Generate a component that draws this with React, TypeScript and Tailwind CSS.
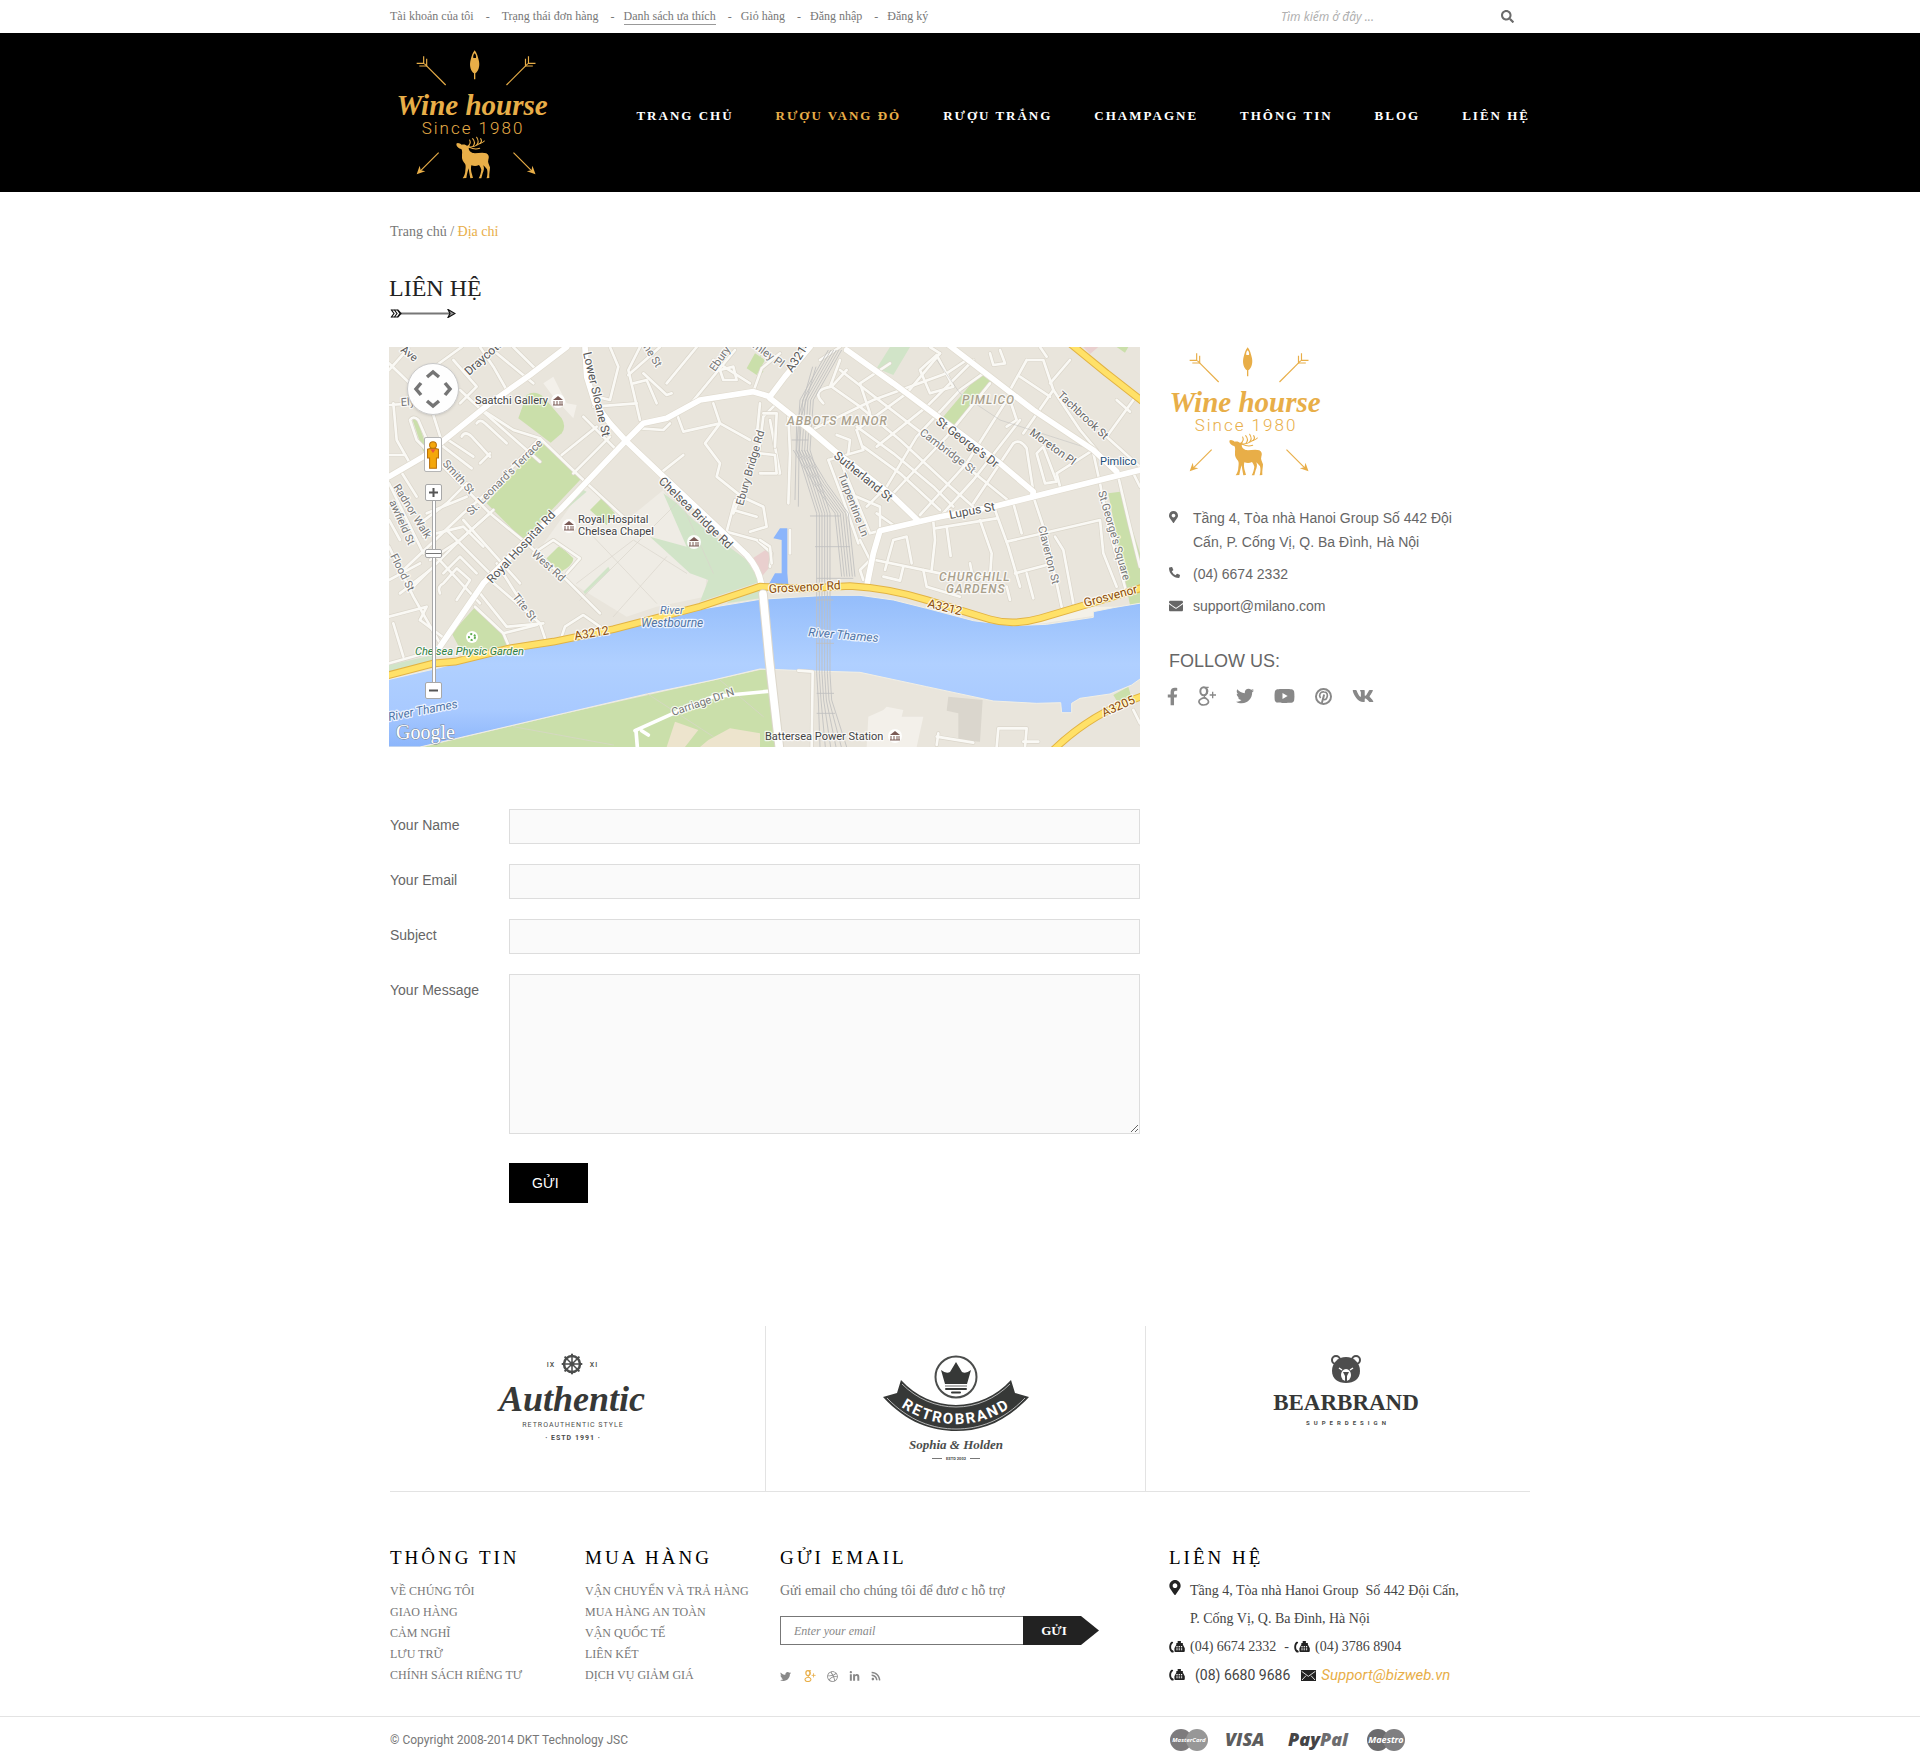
import type { ReactNode } from "react";
import {
  FaDribbble,
  FaEnvelope,
  FaFacebookF,
  FaLinkedinIn,
  FaMapMarkerAlt,
  FaPhoneAlt,
  FaRss,
  FaSearch,
  FaTwitter,
  FaVk,
  FaYoutube,
} from "react-icons/fa";

const SERIF = "font-['Liberation_Serif',serif]";
const SANS = "font-['Liberation_Sans',sans-serif]";
const CONTAINER = "mx-auto w-full max-w-[1140px]";

/* ---------- Logo ---------- */

function ArrowPair() {
  return (
    <g>
      <g fill="none" stroke="currentColor" strokeWidth="3.5">
        <path d="M204 155 L140 91" />
        <path d="M117 90 H138 V69" />
        <path d="M125 98 H147 V76" />
        <path d="M183 358 L126 415" />
      </g>
      <path fill="currentColor" d="M117 423 L126 397 L129 411 L143 414 Z" />
    </g>
  );
}

function WineLogo() {
  return (
    <svg viewBox="0 0 152 129" className="block h-[129px] w-[152px] overflow-visible text-[#e8ae48]" role="img" aria-label="Wine hourse, since 1980">
      <g transform="scale(0.3333) translate(-55 -50)">
        <ArrowPair />
        <g transform="translate(590.5 0) scale(-1 1)">
          <ArrowPair />
        </g>
        <path
          fill="currentColor"
          fillRule="evenodd"
          d="M291 51 C297 58 301 70 304 84 C307 100 302 114 293 120 V138 H289 V120 C280 114 275 100 278 84 C281 70 285 58 291 51 Z M291 60 C287 64 286 70 287 74 H295 C296 70 295 64 291 60 Z"
        />
        <path
          fill="currentColor"
          d="M236 331 C241 327 247 331 252 334 C259 332 265 334 269 338 L277 336 L273 344 C273 351 277 356 285 359 C299 361 313 355 326 360 C334 364 335 371 332 379 C329 387 335 394 337 402 C337 411 334 420 335 434 L327 435 C330 425 330 414 328 408 C324 402 320 399 317 396 C321 405 318 413 315 420 L311 435 L303 435 C308 426 310 417 311 409 C309 403 307 399 304 395 C296 399 288 398 281 396 C279 404 280 414 283 423 L286 434 L278 435 C276 423 274 414 273 405 C270 414 268 423 266 434 L255 435 C260 428 263 420 263 411 C264 403 265 396 262 391 C256 385 252 378 253 368 C253 359 255 353 251 347 C246 346 240 342 237 337 Z"
        />
        <g fill="none" stroke="currentColor" strokeWidth="3.2" strokeLinecap="round">
          <path d="M268 340 C282 343 292 340 300 334 C308 330 316 328 320 323" />
          <path d="M268 340 C276 335 280 328 276 320" />
          <path d="M286 339 C292 332 291 323 285 316" />
          <path d="M297 335 C303 329 302 320 297 312" />
          <path d="M308 330 C312 326 312 320 309 316" />
          <path d="M275 342 C285 347 298 348 306 345" />
        </g>
      </g>
      <text x="76" y="65" textAnchor="middle" fontFamily="'Liberation Serif', serif" fontStyle="italic" fontWeight="700" fontSize="29" fill="currentColor">
        Wine hourse
      </text>
      <text x="77" y="84" textAnchor="middle" fontFamily="Roboto, sans-serif" fontWeight="300" fontSize="17" letterSpacing="2" fill="currentColor">
        Since 1980
      </text>
    </svg>
  );
}

/* ---------- Small icons ---------- */

function GooglePlusIcon({ className }: { className: string }) {
  return (
    <svg viewBox="0 0 54 58" className={className} fill="none" stroke="currentColor" aria-hidden="true">
      <ellipse cx="17" cy="15" rx="10" ry="12" strokeWidth="6" />
      <path d="M19 3 H32 M25 5 C30 12 31 19 24 25 C16 30 18 33 25 37" strokeWidth="4" />
      <path d="M25 37 C38 46 29 56 17 56 C2 56 -2 42 10 37 C16 34 22 35 25 37 Z" strokeWidth="5" />
      <path d="M44 16 V36 M35 26 H54" strokeWidth="4" />
    </svg>
  );
}

function PinterestIcon() {
  return (
    <svg viewBox="0 0 52 52" className="size-[17px]" fill="none" stroke="currentColor" aria-hidden="true">
      <circle cx="26" cy="26" r="23" strokeWidth="6" />
      <path d="M17 31 C10 21 17 11 27 12 C38 12 40 22 36 30 C33 37 26 37 24 31" strokeWidth="5" />
      <path d="M28 20 L21 46" strokeWidth="6" />
    </svg>
  );
}

function DeskPhoneIcon() {
  return (
    <svg viewBox="0 0 48 37" className="h-3 w-4 shrink-0 text-[#222222]" aria-hidden="true">
      <path fill="currentColor" d="M6 3 C9 1 13 2 12 5 C12 8 9 8 8 10 C5 15 5 22 8 27 C9 29 13 28 14 32 C14 36 9 37 6 34 C-2 26 -2 11 6 3 Z" />
      <path fill="currentColor" d="M26 0 H36 V6 H42 V11 L48 22 V31 Q48 34 45 34 H19 Q16 34 16 31 V22 L22 11 V6 H26 Z" />
      <path stroke="#fff" strokeWidth="3" strokeDasharray="4 3" d="M22 17 H43 M22 22 H43 M22 27 H43" />
    </svg>
  );
}

function MailIcon() {
  return (
    <svg viewBox="0 0 45 33" className="h-[11px] w-[15px] shrink-0" aria-hidden="true">
      <rect width="45" height="33" fill="#222222" />
      <path d="M2 4 L22 19 L43 4 M3 30 L15 17 M42 30 L30 17" stroke="#fff" strokeWidth="2.5" fill="none" />
    </svg>
  );
}

/* ---------- Map ---------- */

const WEST_LANES = [
  "M27 90 L85 25", "M27 70 L110 150", "M150 90 L245 21", "M220 60 L290 140 L240 190", "M300 21 L340 80 L380 150", "M400 21 L470 90",
  "M240 150 L310 215 L480 365", "M350 40 L460 130", "M27 195 L100 190 M40 190 L50 300 L90 370",
  "M90 240 L110 300 L140 330 M90 240 Q100 225 115 240 L150 320", "M160 225 L190 320 M190 320 L275 385 M205 300 L280 350",
  "M245 290 Q255 270 275 290 L330 350 M290 250 Q300 235 315 250 L380 310 M330 340 L300 370",
  "M300 205 L400 270 L480 295 L610 420", "M480 295 L330 450 L250 520 L60 700", "M180 370 L330 520 L440 610", "M330 520 L250 590 L100 740",
  "M27 430 L130 640 M60 390 L110 470", "M27 540 L60 600", "M27 620 L100 770 L180 910", "M27 345 L75 345",
  "M120 550 L200 490 L260 430 M140 520 L260 470", "M130 590 L250 560 L310 620", "M200 570 L330 700", "M250 540 L420 730", "M160 640 L300 790",
  "M180 760 Q170 740 190 730 L230 685 L270 720 L230 780", "M190 700 L240 650 L290 700", "M150 660 L240 600 L340 510",
  "M27 720 L120 670 M60 760 L150 690", "M27 830 L140 800 L120 840 M40 850 L70 950", "M27 970 L170 930", "M120 840 L200 900",
  "M285 800 L370 880 L385 915", "M300 760 L380 860 L490 850", "M330 720 L480 850 L495 895", "M350 670 L420 780", "M370 880 L470 855",
  "M545 890 L555 860 L610 825 L660 860", "M440 610 L560 720 L660 820", "M610 420 L740 540", "M610 230 L710 330", "M545 345 L650 260", "M580 400 L690 290",
  "M640 200 L770 190", "M690 21 L715 80 L690 180 L650 170", "M780 21 L745 90 L780 240", "M840 21 L745 105", "M760 130 L800 120 L830 190",
  "M790 100 L860 165 L875 160", "M860 130 L950 21", "M890 220 L910 275 L1020 250 L1000 190", "M780 265 L850 270 L870 250",
  "M1020 250 L975 310 L1020 370 L1010 410 L1085 470 L1150 500 L1160 560 L1110 575", "M1065 480 L1040 575 L1130 600 L1175 640 L1170 680",
  "M1120 155 L1145 85 L1200 40", "M1000 60 L1110 130", "M925 200 L1065 30", "M1140 190 L1130 290", "M1190 190 L1150 230 L1135 350",
  "M1170 240 L1200 400 L1150 400", "M1020 250 L1110 300", "M840 400 L910 345", "M1060 510 L1130 530 M1080 470 L1060 520",
  "M460 640 L520 600 L600 655 L560 700", "M1020 90 L1060 80 L1070 120 L1030 120 Z",
];

const EAST_LANES = [
  "M240 90 L460 260 L620 380 L755 490", "M215 140 L300 200 L420 300 L560 430 L640 500", "M290 260 L400 340 L520 440 L580 500",
  "M310 320 L420 400 L540 510", "M165 265 L340 180 L560 100 L620 60", "M190 190 Q150 150 215 140 L260 90 M210 140 L240 60", "M180 60 L240 21",
  "M290 270 L440 160 L540 40", "M350 320 L500 200 L640 60", "M320 500 L380 440 L470 290 L600 150 L670 100", "M390 470 L560 290 L690 130",
  "M480 525 L620 370 L740 180", "M540 530 L640 420 L780 240", "M640 490 L760 310 Q780 295 800 325 L820 455", "M330 220 L300 130 L390 70",
  "M480 90 L530 45 L580 140 L510 160 L480 90", "M540 40 L510 21", "M690 40 L700 75 L735 70 L720 30", "M750 180 L770 240 L740 260",
  "M800 60 L750 150 M800 60 L850 60 L880 150 L790 280", "M780 110 L870 170", "M880 150 L960 270 L1010 330", "M840 21 L860 50",
  "M1140 380 L1040 290 L1120 180", "M1070 180 L1110 215", "M830 340 L855 430 L890 425 L850 320 Z", "M900 440 L890 400 L1000 330",
  "M1000 340 L1020 430 L1045 560 L1100 760", "M1070 390 L1110 560 L1140 680", "M820 470 L860 590 L905 800", "M740 605 L1020 540 L1030 640 L1070 740",
  "M705 510 L745 620 L780 740", "M760 490 L785 580", "M660 540 L695 640 L690 710", "M520 545 L525 600 L515 690", "M765 700 L860 675",
  "M800 700 L820 775", "M885 590 L910 630 L940 790", "M560 560 L572 648", "M525 565 L710 535", "M345 660 L540 700 L700 705",
  "M375 690 L400 600 L440 590 L455 670 M370 710 L420 722 L430 680", "M490 690 L500 740 L600 770", "M740 740 L750 780", "M630 670 L640 720",
  "M205 360 L250 480 L295 610 M205 360 L310 330 L290 270", "M230 285 L270 300 L265 340", "M240 360 L330 580 L350 575", "M300 600 L330 660 L300 690 L310 720",
  "M85 230 L90 340 L85 490", "M90 570 V640", "M10 220 L50 220 L45 320 M0 340 L45 345 L50 400 L0 400", "M0 600 L30 620 L35 670",
  "M115 992 L158 995 L155 1221", "M530 1190 L640 1208 M535 1180 L530 1215", "M710 1221 L715 1165 L800 1165 L795 1221 M790 1205 L835 1205",
  "M1120 400 L1140 440", "M350 520 L400 555 M360 570 V500 L290 470", "M1120 1110 L1140 1150", "M930 60 L870 130",
];

const MAIN_ROADS = [
  "M27 410 L130 350 L330 190 L450 105 L560 21",
  "M615 21 L620 110 L645 190 L690 250 L735 300 L840 400 L1000 550 L1100 645 Q1140 690 1145 740",
  "M180 920 L310 730 L440 600 L540 510 L735 305 L790 250 L860 235 L960 180 L1120 155 L1170 170 L1215 110 L1290 21",
  "M1170 175 L1290 270 L1360 330 L1540 470 L1612 540",
  "M1400 30 L1540 130 L1660 220 L1860 370 L1960 455 L1958 470",
  "M1700 10 L1960 210 L2140 330 L2210 395",
  "M2300 385 L2160 420 L1840 500 L1680 530 L1500 572 L1480 640 L1460 740",
];

const ARTERIAL =
  "M20 1007 L163 970 L225 965 L390 925 L520 905 L700 868 L960 800 L1080 760 L1140 740 L1270 745 L1410 738 Q1530 745 1640 780 L1830 838 Q1900 858 1980 835 L2200 770 L2290 742";

const YELLOW_ROADS = [ARTERIAL, "M2070 10 L2180 100 L2290 186", "M2290 1068 Q2140 1115 2020 1230"];

const RIVER =
  "M20 1020 L163 987 L300 952 L400 930 L600 895 L800 843 L960 808 L1140 778 L1340 766 L1440 766 L1540 780 L1640 805 L1780 842 L1900 857 L2000 853 L2140 832 V815 L2200 803 L2290 788 V1010 L2255 1035 L2190 1062 L2100 1075 L2075 1090 V1118 H2045 L2042 1088 L1970 1090 L1840 1083 L1640 1040 L1440 997 L1300 993 L1140 987 L1000 1020 L800 1062 L560 1118 L120 1221 H20 Z";

type MapLabel = [text: string, x: number, y: number, angle: number, size: number, color: string, extra?: "italic" | "area"];

const MAP_LABELS: MapLabel[] = [
  ["Ave", 11, 4, 38, 11, "#555555"],
  ["Draycott", 80, 29, -42, 12, "#555555"],
  ["Ely", 12, 59, -4, 11, "#777777"],
  ["Saatchi Gallery", 86, 57, 0, 11, "#444444"],
  ["Lower Sloane St", 194, 6, 77, 12, "#555555"],
  ["Ebury", 326, 25, -55, 11, "#777777"],
  ["mley Pl", 363, 0, 36, 11, "#777777"],
  ["ne St", 254, 0, 58, 11, "#777777"],
  ["Smith St", 53, 117, 48, 11, "#777777"],
  ["St. Leonard's Terrace", 82, 169, -45, 11, "#777777"],
  ["Radnor Walk", 4, 140, 58, 11, "#777777"],
  ["awfield St", 0, 155, 66, 11, "#777777"],
  ["Flood St", 1, 209, 63, 11, "#777777"],
  ["Royal Hospital Rd", 103, 237, -47, 12, "#555555"],
  ["West Rd", 142, 208, 42, 11, "#777777"],
  ["Tite St", 123, 250, 52, 11, "#777777"],
  ["Chelsea Bridge Rd", 269, 135, 44, 12, "#555555"],
  ["Ebury Bridge Rd", 354, 159, -74, 11, "#666666"],
  ["Royal Hospital", 189, 176, 0, 11, "#444444"],
  ["Chelsea Chapel", 189, 188, 0, 11, "#444444"],
  ["Chelsea Physic Garden", 26, 308, 0, 11, "#2f8145", "italic"],
  ["River", 271, 267, 0, 11, "#5075a8", "italic"],
  ["Westbourne", 252, 280, 0, 12, "#5075a8", "italic"],
  ["River Thames", 0, 374, -11, 12, "#5075a8", "italic"],
  ["A3212", 186, 293, -10, 12, "#8a4b08"],
  ["A3212", 538, 260, 14, 12, "#8a4b08"],
  ["Carriage Dr N", 284, 369, -19, 11, "#777777"],
  ["A3214", 403, 26, -57, 12, "#555555"],
  ["ABBOTS MANOR", 398, 78, 0, 12, "#a9a08c", "area"],
  ["PIMLICO", 573, 57, 0, 12, "#a9a08c", "area"],
  ["CHURCHILL", 550, 234, 0, 12, "#a9a08c", "area"],
  ["GARDENS", 557, 246, 0, 12, "#a9a08c", "area"],
  ["Sutherland St", 444, 110, 39, 12, "#555555"],
  ["Turpentine Ln", 449, 128, 69, 11, "#777777"],
  ["Cambridge St", 530, 87, 37, 11, "#777777"],
  ["St George's Dr", 546, 76, 37, 12, "#555555"],
  ["Tachbrook St", 668, 49, 43, 11, "#666666"],
  ["Moreton Pl", 640, 87, 36, 11, "#666666"],
  ["Pimlico", 711, 118, 0, 11, "#1c4f7a"],
  ["Lupus St", 561, 172, -11, 12, "#555555"],
  ["Claverton St", 649, 180, 76, 11, "#777777"],
  ["St.George's Square", 709, 145, 74, 11, "#777777"],
  ["Grosvenor Rd", 380, 246, -3, 12, "#8a4b08"],
  ["Grosvenor", 696, 260, -15, 12, "#8a4b08"],
  ["River Thames", 419, 289, 5, 12, "#5075a8", "italic"],
  ["Battersea Power Station", 376, 393, 0, 11, "#444444"],
  ["A3205", 715, 370, -24, 12, "#8a4b08"],
];

function Landmark({ x, y }: { x: number; y: number }) {
  return (
    <g transform={`translate(${x} ${y})`}>
      <circle r="7" fill="#fff" opacity="0.9" />
      <path d="M-5 -1 L0 -5 L5 -1 Z" fill="#7a5a55" />
      <path d="M-4 0 V4 M-1 0 V4 M2 0 V4 M4 0 V4 M-5 4 H5" stroke="#7a5a55" />
    </g>
  );
}

function Roads({ paths, width, color }: { paths: string[]; width: number; color: string }) {
  return (
    <g fill="none" stroke={color} strokeWidth={width} strokeLinejoin="round" strokeLinecap="round">
      {paths.map((d) => (
        <path key={d} d={d} />
      ))}
    </g>
  );
}

const RAILS = [0, 8, 16, 24, 32, 40];

function MapDrawing() {
  return (
    <svg viewBox="0 0 751 400" preserveAspectRatio="xMidYMid slice" className="block h-[400px] w-full" role="img" aria-label="Bản đồ">
      <defs>
        <linearGradient id="water" x1="0" y1="0" x2="0" y2="1">
          <stop offset="0" stopColor="#94bdfb" />
          <stop offset="0.45" stopColor="#b0d0ff" />
          <stop offset="0.75" stopColor="#a9caff" />
          <stop offset="1" stopColor="#8bb5fb" />
        </linearGradient>
      </defs>
      <rect width="751" height="400" fill="#e9e5dc" />
      <g transform="translate(-9 -7) scale(0.33333)">
        <path fill="#efece5" d="M620 430 L740 540 L850 450 L980 700 L975 770 L830 800 L740 830 L560 720 L470 640 Z" />
        <g fill="#cadfaa">
          <path d="M415 235 L440 165 Q465 150 490 170 L545 235 Q560 260 545 280 L512 308 Z" />
          <path d="M485 305 L605 415 L430 600 L320 490 Z" />
          <path d="M630 510 L665 475 L705 520 L680 555 Z M500 655 L535 620 Q545 620 580 655 Q580 670 560 685 L535 700 Z" />
          <path d="M215 880 L285 802 L370 880 L385 915 L250 945 Z" />
          <path d="M1100 85 L1125 40 L1155 60 L1130 105 Z M98 240 L110 232 L140 325 L130 335 Z" />
          <path d="M1690 230 L1800 100 L1835 125 L1725 265 Z" />
          <path d="M2185 460 L2220 455 L2280 640 V790 L2250 795 Z" />
          <path d="M2210 21 H2245 L2235 38 Z M2200 1065 L2245 1040 L2255 1075 L2215 1090 Z" />
          <path d="M130 1221 L550 1122 L1140 990 L1165 988 L1210 1221 Z" />
          <path d="M1140 40 V105 L1150 95 Z" />
        </g>
        <g fill="#d1e4c8">
          <path d="M850 460 L890 490 L940 540 L1100 660 L1140 725 L960 785 L985 720 L930 700 L810 590 L920 620 Z" />
          <path d="M1490 85 L1530 21 H1590 L1540 105 Z M610 755 L685 680 L690 690 L615 762 Z M550 515 L610 450 L620 455 Z" />
          <path d="M27 975 L160 945 V965 L27 1000 Z M1060 775 L1140 750 V775 L1040 790 Z" />
        </g>
        <path fill="#ede4cd" d="M885 1145 L955 1170 L915 1221 H860 Z M985 1200 L1050 1165 L1140 1180 V1221 H960 Z" />
        <path fill="#e9cfce" d="M1110 660 L1165 625 L1170 680 L1145 710 Z M2110 21 H2155 L2130 42 Z" />
        <path fill="#dad6cd" d="M1705 1070 L1808 1080 L1800 1205 L1735 1200 V1120 L1700 1112 Z" />
        <path fill="#f3f0ea" d="M1465 1130 L1510 1110 L1520 1100 L1570 1110 L1565 1130 L1630 1130 L1610 1221 H1460 Z M490 130 L520 110 L560 190 L590 195 L580 235 L520 170 Z" />
        <path fill="#8bb5fb" d="M1180 595 L1200 565 H1222 V700 L1225 735 H1165 L1185 700 L1205 700 V600 Z" />
        <path fill="#f4f1e8" d="M1900 857 L1990 850 L2140 828 V815 L2220 800 L2140 800 Z" />
        <path fill="url(#water)" d={RIVER} stroke="#f2efe4" strokeWidth="3" />

        <Roads paths={["M600 780 L900 480 L1000 700", "M640 590 L830 790", "M590 730 L760 600 L920 700", "M700 830 L860 650", "M800 1060 L1000 1190", "M400 1160 L700 1215", "M1020 1020 L1150 1130"]} width={2} color="#d9d5cb" />
        <Roads paths={WEST_LANES} width={12} color="#dbd6cb" />
        <Roads paths={WEST_LANES} width={8} color="#faf9f5" />
        <g transform="translate(1140 0)">
          <Roads paths={EAST_LANES} width={12} color="#dbd6cb" />
          <Roads paths={EAST_LANES} width={8} color="#faf9f5" />
        </g>
        <Roads paths={["M765 1172 L880 1120 L1000 1070 L1185 1052", "M768 1172 L772 1221 M785 1172 L805 1185"]} width={11} color="#ffffff" />

        <g fill="none" stroke="#bfbfbf" strokeWidth="2.5">
          {RAILS.map((o) => (
            <path key={o} d={`M${1345 + o} 30 L${1260 + o} 180 L${1250 + o} 330 L${1310 + o} 520 L${1310 + o} 1000 L${1315 + o} 1080 L${1320 + o * 2} 1221`} />
          ))}
          {RAILS.map((o) => (
            <path key={`b${o}`} d={`M${1240 + o} 330 L${1300 + o} 430 L${1365 + o} 520 L${1385 + o} 710`} />
          ))}
          <path d="M1298 80 L1250 250 L1245 480 M1308 80 L1258 250 L1255 500" />
          <path d="M1400 30 L1560 150 M1670 60 L1740 160 L1860 240 L2140 330" strokeWidth="1.5" />
          <path d="M1290 528 H1380 M1235 300 H1285 M1305 620 H1410 M1310 715 H1420 M1310 780 H1360 M1308 910 H1362 M1310 1060 H1362 M1310 1120 H1365" />
        </g>

        <Roads paths={MAIN_ROADS} width={21} color="#e0dbcf" />
        <Roads paths={MAIN_ROADS} width={17} color="#ffffff" />
        <Roads paths={YELLOW_ROADS} width={23} color="#e2b343" />
        <Roads paths={YELLOW_ROADS} width={17} color="#ffe168" />
        <Roads paths={["M1149 762 L1168 960 L1200 1240"]} width={29} color="#dcd7cb" />
        <Roads paths={["M1149 762 L1168 960 L1200 1240"]} width={23} color="#ffffff" />
      </g>

      <g fontFamily="Roboto, sans-serif" stroke="#ffffff" strokeOpacity="0.75" strokeWidth="2.5" paintOrder="stroke" strokeLinejoin="round">
        {MAP_LABELS.map(([text, x, y, angle, size, color, extra]) => (
          <text
            key={`${text}-${x}`}
            transform={`translate(${x} ${y}) rotate(${angle})`}
            fontSize={size}
            fill={color}
            fontStyle={extra ? "italic" : "normal"}
            fontWeight={extra === "area" ? 500 : 400}
            letterSpacing={extra === "area" ? 1 : 0}
          >
            {text}
          </text>
        ))}
      </g>
      <Landmark x={169} y={54} />
      <Landmark x={180} y={179} />
      <Landmark x={305} y={195} />
      <Landmark x={506} y={389} />
      <circle cx="83" cy="290" r="6" fill="#fff" />
      <circle cx="83" cy="290" r="3" fill="none" stroke="#5fae4f" strokeWidth="2" strokeDasharray="2 2" />
      <text x="7" y="392" fontFamily="'Liberation Serif', serif" fontSize="20" fill="#ffffff" stroke="#7d8a99" strokeWidth="1" paintOrder="stroke">
        Google
      </text>
    </svg>
  );
}

const MAP_BUTTON =
  "flex h-[17px] w-[17px] items-center justify-center rounded-[2px] border border-[#a8a8a8] bg-white text-[#555555]";

function ContactMap() {
  return (
    <div className="relative">
      <MapDrawing />
      <div className="absolute top-4 left-[18px] flex w-[52px] flex-col items-center">
        <button type="button" aria-label="Di chuyển bản đồ" className="flex size-[52px] items-center justify-center rounded-full border border-[#c9c9c9] bg-white/95 shadow">
          <svg viewBox="0 0 50 50" className="size-[50px]" fill="none" stroke="#757575" strokeWidth="3.5">
            <path d="M19 13 L25 8 L31 13 M19 37 L25 42 L31 37 M13 19 L8 25 L13 31 M37 19 L42 25 L37 31" />
          </svg>
        </button>
        <button type="button" aria-label="Chế độ xem phố" className="mt-[22px] flex h-[35px] w-[18px] items-center justify-center rounded-[2px] border border-[#b5b5b5] bg-white">
          <svg viewBox="0 0 40 82" className="h-7 w-[14px]">
            <circle cx="20" cy="12" r="10" fill="#f4a70c" stroke="#b9700a" strokeWidth="3" />
            <path d="M4 24 Q20 18 36 24 V50 H30 V80 H10 V50 H4 Z" fill="#f4a70c" stroke="#b9700a" strokeWidth="3" />
            <path d="M12 24 H28 L20 35 Z" fill="#e9573f" />
          </svg>
        </button>
        <button type="button" aria-label="Phóng to" className={`${MAP_BUTTON} mt-3`}>
          <svg viewBox="0 0 9 9" className="size-[9px]" stroke="currentColor" strokeWidth="2">
            <path d="M0 4.500 H9 M4.500 0 V9" />
          </svg>
        </button>
        <input
          type="range"
          aria-label="Mức thu phóng"
          defaultValue={28}
          className="m-0 h-[181px] w-[17px] appearance-none bg-[linear-gradient(to_right,transparent_7px,#a8a8a8_7px,#a8a8a8_8px,#ffffff_8px,#ffffff_10px,#a8a8a8_10px,#a8a8a8_11px,transparent_11px)] [writing-mode:vertical-lr] [&::-webkit-slider-thumb]:h-[9px] [&::-webkit-slider-thumb]:w-[17px] [&::-webkit-slider-thumb]:appearance-none [&::-webkit-slider-thumb]:rounded-[2px] [&::-webkit-slider-thumb]:border [&::-webkit-slider-thumb]:border-[#a8a8a8] [&::-webkit-slider-thumb]:bg-[linear-gradient(#ffffff_3px,#777777_3px,#777777_4px,#ffffff_4px)]"
        />
        <button type="button" aria-label="Thu nhỏ" className={MAP_BUTTON}>
          <svg viewBox="0 0 9 9" className="size-[9px]" stroke="currentColor" strokeWidth="2">
            <path d="M0 4.500 H9" />
          </svg>
        </button>
      </div>
    </div>
  );
}

/* ---------- Header ---------- */

const TOP_LINKS = ["Tài khoản của tôi", "Trạng thái đơn hàng", "Danh sách ưa thích", "Giỏ hàng", "Đăng nhập", "Đăng ký"];
const NAV = ["TRANG CHỦ", "RƯỢU VANG ĐỎ", "RƯỢU TRẮNG", "CHAMPAGNE", "THÔNG TIN", "BLOG", "LIÊN HỆ"];

function Header() {
  return (
    <header>
      <div className={`${CONTAINER} flex h-[33px] items-center justify-between`}>
        <ul className={`flex gap-3 text-xs text-[#777777] ${SERIF}`}>
          {TOP_LINKS.map((label, i) => (
            <li key={label} className={i === 1 ? "flex gap-3" : "flex gap-[9px]"}>
              {i > 0 && <span>-</span>}
              <a href="#" className={i === 2 ? "border-b border-[#999999] leading-[14px]" : "leading-[14px]"}>
                {label}
              </a>
            </li>
          ))}
        </ul>
        <form className="mr-4 flex items-center" role="search">
          <input
            type="search"
            aria-label="Tìm kiếm"
            placeholder="Tìm kiếm ở đây ..."
            className="w-[220px] font-['Noto_Sans',sans-serif] text-xs italic outline-none placeholder:text-[#b0b0b0]"
          />
          <button type="submit" aria-label="Tìm" className="text-[#6b6b6b]">
            <FaSearch className="size-[13px]" />
          </button>
        </form>
      </div>
      <div className="bg-black">
        <div className={`${CONTAINER} flex min-h-[159px] items-center justify-between pt-[3px]`}>
          <a href="#" className="ml-[6px]">
            <WineLogo />
          </a>
          <nav className="pt-[3px]">
            <ul className={`flex flex-wrap gap-[42px] text-[13px] font-bold tracking-[2px] text-white ${SERIF}`}>
              {NAV.map((label, i) => (
                <li key={label}>
                  <a href="#" className={i === 1 ? "text-[#e8ae48]" : ""}>
                    {label}
                  </a>
                </li>
              ))}
            </ul>
          </nav>
        </div>
      </div>
    </header>
  );
}

/* ---------- Contact ---------- */

function ContactDetail({ icon, children }: { icon: ReactNode; children: ReactNode }) {
  return (
    <div className="flex">
      <dt className="w-6 shrink-0 pt-[5px] text-[#666666]">{icon}</dt>
      <dd>{children}</dd>
    </div>
  );
}

function ContactAside() {
  return (
    <aside className={`col-span-4 -ml-px text-[#666666] ${SANS}`}>
      <WineLogo />
      <dl className="mt-[30px] space-y-2 text-sm leading-6">
        <ContactDetail icon={<FaMapMarkerAlt className="h-3 w-[9px]" />}>
          Tầng 4, Tòa nhà Hanoi Group Số 442 Đội
          <br />
          Cấn, P. Cống Vị, Q. Ba Đình, Hà Nội
        </ContactDetail>
        <ContactDetail icon={<FaPhoneAlt className="size-[11px]" />}>(04) 6674 2332</ContactDetail>
        <ContactDetail icon={<FaEnvelope className="size-[14px]" />}>support@milano.com</ContactDetail>
      </dl>
      <h2 className="mt-[29px] text-lg leading-7">FOLLOW US:</h2>
      <div className="mt-[11px] -ml-[2px] flex h-5 items-center gap-5 text-[#888888]">
        <a href="#" aria-label="Facebook"><FaFacebookF className="h-[19px] w-[11px]" /></a>
        <a href="#" aria-label="Google Plus"><GooglePlusIcon className="h-5 w-[18px]" /></a>
        <a href="#" aria-label="Twitter"><FaTwitter className="size-[18px]" /></a>
        <a href="#" aria-label="YouTube"><FaYoutube className="h-5 w-[21px]" /></a>
        <a href="#" aria-label="Pinterest"><PinterestIcon /></a>
        <a href="#" aria-label="VK"><FaVk className="size-[22px]" /></a>
      </div>
    </aside>
  );
}

const FIELDS = [
  { id: "name", label: "Your Name", type: "text" },
  { id: "email", label: "Your Email", type: "email" },
  { id: "subject", label: "Subject", type: "text" },
];

const FIELD_BOX = "block min-w-0 flex-1 border border-[#dddddd] bg-[#fafafa] px-3 text-sm outline-none";

function ContactForm() {
  return (
    <form className={`mt-[62px] space-y-5 text-sm text-[#666666] ${SANS}`}>
      {FIELDS.map((f) => (
        <div key={f.id} className="flex">
          <label htmlFor={f.id} className="w-[120px] pl-px leading-[33px]">{f.label}</label>
          <input id={f.id} type={f.type} className={`${FIELD_BOX} h-[35px]`} />
        </div>
      ))}
      <div className="flex">
        <label htmlFor="message" className="w-[120px] pl-px leading-[33px]">Your Message</label>
        <textarea id="message" className={`${FIELD_BOX} h-[160px] resize-y py-2`} />
      </div>
      <div className="pt-[9px] pl-[120px]">
        <button type="submit" className="flex h-10 w-[79px] items-center bg-black pl-[23px] text-sm text-white">GỬI</button>
      </div>
    </form>
  );
}

/* ---------- Brands ---------- */

const SPOKES = [0, 45, 90, 135, 180, 225, 270, 315];

function AuthenticLogo() {
  return (
    <svg viewBox="0 0 150 90" className="h-[90px] w-[150px] overflow-visible" role="img" aria-label="Authentic">
      <g transform="translate(75 11)" stroke="#4b4d4c" fill="none">
        <circle r="8" strokeWidth="2.500" />
        <circle r="2" fill="#4b4d4c" />
        {SPOKES.map((a) => (
          <g key={a} transform={`rotate(${a})`}>
            <path d="M0 0 V-10" strokeWidth="1.500" />
            <circle cy="-9.500" r="1" fill="#4b4d4c" stroke="none" />
          </g>
        ))}
      </g>
      <g textAnchor="middle" fill="#4b4d4c" fontFamily="Roboto, sans-serif">
        <text x="54" y="14" fontSize="7" fontWeight="500" letterSpacing="1">IX</text>
        <text x="97" y="14" fontSize="7" fontWeight="500" letterSpacing="1">XI</text>
        <text x="75" y="58" fontSize="36" fontWeight="700" fontStyle="italic" fontFamily="'Liberation Serif', serif" fill="#363837">Authentic</text>
        <text x="76" y="74" fontSize="7" letterSpacing="1">RETROAUTHENTIC STYLE</text>
        <text x="76" y="87" fontSize="7" fontWeight="700" letterSpacing="1">· ESTD 1991 ·</text>
      </g>
    </svg>
  );
}

function RetroLogo() {
  return (
    <svg viewBox="0 0 148 108" className="h-[108px] w-[148px] overflow-visible" role="img" aria-label="Retrobrand, Sophia and Holden">
      <circle cx="74" cy="22" r="20.500" fill="none" stroke="#4b4d4c" strokeWidth="2" />
      <path fill="#363837" d="M63 29 L59 15 Q64 19 68 17 L74 7 L80 17 Q84 19 89 15 L85 29 Z" />
      <path stroke="#b5b5b5" strokeWidth="2" d="M63 31 H85" />
      <path stroke="#363837" strokeWidth="2" strokeLinecap="round" d="M64 34 H84 M70 37.500 H78" />
      <path
        fill="#363837"
        d="M19 25 C34 41 53 50 74 50 C95 50 114 41 129 25 L133 38 L147 42 C123 68 98 76 74 76 C50 76 25 68 1 42 L15 38 Z"
      />
      <path fill="none" stroke="#d4d4d4" strokeWidth="0.800" d="M20 29 C35 44 54 52 74 52 C94 52 113 44 128 29 M5 43 C27 66 51 74 74 74 C97 74 121 66 143 43" />
      <path id="ribbon" fill="none" d="M11 46 C33 63 53 69 74 69 C95 69 115 63 137 46" />
      <text fill="#ffffff" fontFamily="Roboto, sans-serif" fontWeight="700" fontSize="15" letterSpacing="2" textAnchor="middle">
        <textPath href="#ribbon" startOffset="50%">RETROBRAND</textPath>
      </text>
      <text x="74" y="94" textAnchor="middle" fontFamily="'Liberation Serif', serif" fontStyle="italic" fontWeight="700" fontSize="13" fill="#4b4d4c">
        Sophia &amp; Holden
      </text>
      <path stroke="#777777" d="M50 103.500 H60 M88 103.500 H98" />
      <text x="74" y="105" textAnchor="middle" fontFamily="Roboto, sans-serif" fontWeight="700" fontSize="4" fill="#4b4d4c">ESTD 2002</text>
    </svg>
  );
}

function BearLogo() {
  return (
    <svg viewBox="0 0 152 80" className="h-20 w-[152px] overflow-visible" role="img" aria-label="Bearbrand, superdesign">
      <g fill="#4d4d4d">
        <circle cx="66" cy="6" r="4" fill="#fff" stroke="#4d4d4d" strokeWidth="2" />
        <circle cx="86" cy="6" r="4" fill="#fff" stroke="#4d4d4d" strokeWidth="2" />
        <path d="M76 3 C84 3 90 9 90 17 C90 25 84 29 76 29 C68 29 62 25 62 17 C62 9 68 3 76 3 Z" />
      </g>
      <ellipse cx="76" cy="21" rx="5" ry="6" fill="#fff" />
      <path fill="#4d4d4d" d="M73 18 H79 L77 22 V27 H75 V22 Z" />
      <path stroke="#fff" strokeWidth="1.500" d="M69 14 L72 16 M83 14 L80 16" />
      <text x="76" y="56" textAnchor="middle" fontFamily="'Liberation Serif', serif" fontWeight="700" fontSize="23" fill="#363837">BEARBRAND</text>
      <text x="78" y="71" textAnchor="middle" fontFamily="Roboto, sans-serif" fontWeight="700" fontSize="6" letterSpacing="4" fill="#4b4d4c">SUPERDESIGN</text>
    </svg>
  );
}

function Brands() {
  return (
    <section className="mt-[123px] grid h-[166px] grid-cols-[376fr_380fr_384fr] border-b border-[#e3e3e3]">
      <div className="flex justify-center border-r border-[#e3e3e3] pt-[27px] pr-3"><AuthenticLogo /></div>
      <div className="flex justify-center border-r border-[#e3e3e3] pt-[29px]"><RetroLogo /></div>
      <div className="flex justify-center pt-[28px] pl-4"><BearLogo /></div>
    </section>
  );
}

/* ---------- Footer ---------- */

const INFO = ["VỀ CHÚNG TÔI", "GIAO HÀNG", "CẢM NGHĨ", "LƯU TRỮ", "CHÍNH SÁCH RIÊNG TƯ"];
const SHOP = ["VẬN CHUYỂN VÀ TRẢ HÀNG", "MUA HÀNG AN TOÀN", "VẬN QUỐC TẾ", "LIÊN KẾT", "DỊCH VỤ GIẢM GIÁ"];

function FooterHeading({ children }: { children: ReactNode }) {
  return <h2 className="text-[19px] leading-6 tracking-[3px] whitespace-nowrap text-black">{children}</h2>;
}

function FooterLinks({ title, items }: { title: string; items: string[] }) {
  return (
    <div className="col-span-2">
      <FooterHeading>{title}</FooterHeading>
      <ul className="mt-[11px] text-xs leading-[21px] whitespace-nowrap text-[#777777]">
        {items.map((item) => (
          <li key={item}><a href="#">{item}</a></li>
        ))}
      </ul>
    </div>
  );
}

function PaymentLogos() {
  return (
    <svg viewBox="0 0 236 24" className="h-6 w-[236px] overflow-visible" role="img" aria-label="MasterCard, Visa, PayPal, Maestro">
      <circle cx="11" cy="12" r="11" fill="#7d7b7d" />
      <circle cx="27" cy="12" r="11" fill="#979797" />
      <circle cx="208" cy="12" r="11" fill="#6b6b6d" />
      <circle cx="224" cy="12" r="11" fill="#7f7f81" />
      <g fontFamily="'Open Sans', sans-serif" fontStyle="italic" fontWeight="700">
        <text x="19" y="14" fontSize="6" fill="#fff" textAnchor="middle">MasterCard</text>
        <text x="55" y="18" fontSize="18" fontWeight="800" fill="#5d5d5d">VISA</text>
        <text x="118" y="18" fontSize="18" fontWeight="800" fill="#444446">Pay<tspan fill="#6d6d6f">Pal</tspan></text>
        <text x="216" y="15" fontSize="9" fill="#fff" textAnchor="middle">Maestro</text>
      </g>
    </svg>
  );
}

function Footer() {
  return (
    <footer className={SERIF}>
      <div className={`${CONTAINER} grid grid-cols-12 gap-x-[30px] pt-[54px] pb-[27px]`}>
        <FooterLinks title="THÔNG TIN" items={INFO} />
        <FooterLinks title="MUA HÀNG" items={SHOP} />
        <div className="col-span-4">
          <FooterHeading>GỬI EMAIL</FooterHeading>
          <p className="mt-[10px] text-sm leading-[21px] text-[#777777]">Gửi email cho chúng tôi để đươ c hỗ trợ</p>
          <form className="mt-[15px] flex h-[29px]">
            <input
              type="email"
              aria-label="Email"
              placeholder="Enter your email"
              className="w-[243px] border border-r-0 border-[#777777] px-[13px] text-xs italic outline-none placeholder:text-[#888888]"
            />
            <button type="submit" className="w-[76px] bg-[#222222] pr-[14px] text-[13px] font-bold text-white [clip-path:polygon(0_0,58px_0,100%_50%,58px_100%,0_100%)]">
              GỬI
            </button>
          </form>
          <div className="mt-[25px] flex h-3 items-center gap-[11px] text-[#888888]">
            <a href="#" aria-label="Twitter"><FaTwitter className="size-[11px]" /></a>
            <a href="#" aria-label="Google Plus" className="ml-[2px] text-[#e8ae48]"><GooglePlusIcon className="size-3" /></a>
            <a href="#" aria-label="Dribbble"><FaDribbble className="size-[11px]" /></a>
            <a href="#" aria-label="LinkedIn"><FaLinkedinIn className="size-[11px]" /></a>
            <a href="#" aria-label="RSS"><FaRss className="size-[10px]" /></a>
          </div>
        </div>
        <div className="col-span-4 -ml-px">
          <FooterHeading>LIÊN HỆ</FooterHeading>
          <address className="mt-[7px] text-sm leading-7 whitespace-pre text-[#444444] not-italic">
            <div className="flex">
              <span className="w-[21px] pt-[3px]">
                <FaMapMarkerAlt className="h-[15px] w-[12px] text-[#222222]" />
              </span>
              <span>{"Tầng 4, Tòa nhà Hanoi Group  Số 442 Đội Cấn,\nP. Cống Vị, Q. Ba Đình, Hà Nội"}</span>
            </div>
            <div className="flex items-center gap-[5px]">
              <DeskPhoneIcon />
              <span>(04) 6674 2332</span>
              <span className="ml-[3px]">-</span>
              <DeskPhoneIcon />
              <span>(04) 3786 8904</span>
            </div>
            <div className="flex items-center font-['Roboto',sans-serif]">
              <DeskPhoneIcon />
              <span className="ml-[10px]">(08) 6680 9686</span>
              <span className="mr-[5px] ml-[11px]"><MailIcon /></span>
              <a href="#" className="text-[15px] text-[#e8ae48] italic">Support@bizweb.vn</a>
            </div>
          </address>
        </div>
      </div>
      <div className="border-t border-[#e3e3e3]">
        <div className={`${CONTAINER} grid h-[45px] grid-cols-12 items-center gap-x-[30px]`}>
          <p className="col-span-8 font-['Roboto',sans-serif] text-xs text-[#777777]">© Copyright 2008-2014 DKT Technology JSC</p>
          <div className="col-span-4"><PaymentLogos /></div>
        </div>
      </div>
    </footer>
  );
}

export default function App() {
  return (
    <div className="min-h-screen bg-white">
      <Header />
      <main className={`${CONTAINER} pt-[30px]`}>
        <nav aria-label="Breadcrumb" className={`text-sm leading-5 text-[#777777] ${SERIF}`}>
          <a href="#">Trang chủ</a> / <span className="text-[#e8ae48]">Địa chỉ</span>
        </nav>
        <h1 className={`mt-[30px] -ml-px text-2xl leading-8 text-[#222222] ${SERIF}`}>LIÊN HỆ</h1>
        <svg viewBox="0 0 66 9" className="mt-[5px] h-[9px] w-[66px]" aria-hidden="true">
          <path d="M11 4.500 H60" stroke="#777777" strokeWidth="2" />
          <path d="M1 0.500 L4 4.500 L1 8.500 M4 0.500 L7 4.500 L4 8.500 M7 0.500 L10 4.500 L7 8.500 M1 1 H8 L11 4.500 L8 8 H1" stroke="#111111" strokeWidth="1.200" fill="none" />
          <path d="M58 0.500 L65 4.500 L58 8.500 L60 4.500 Z" fill="#999999" stroke="#111111" strokeWidth="1.200" />
        </svg>
        <div className="mt-[29px] grid grid-cols-12 gap-x-[30px]">
          <div className="col-span-8 -ml-px">
            <ContactMap />
            <ContactForm />
          </div>
          <ContactAside />
        </div>
        <Brands />
      </main>
      <Footer />
    </div>
  );
}
